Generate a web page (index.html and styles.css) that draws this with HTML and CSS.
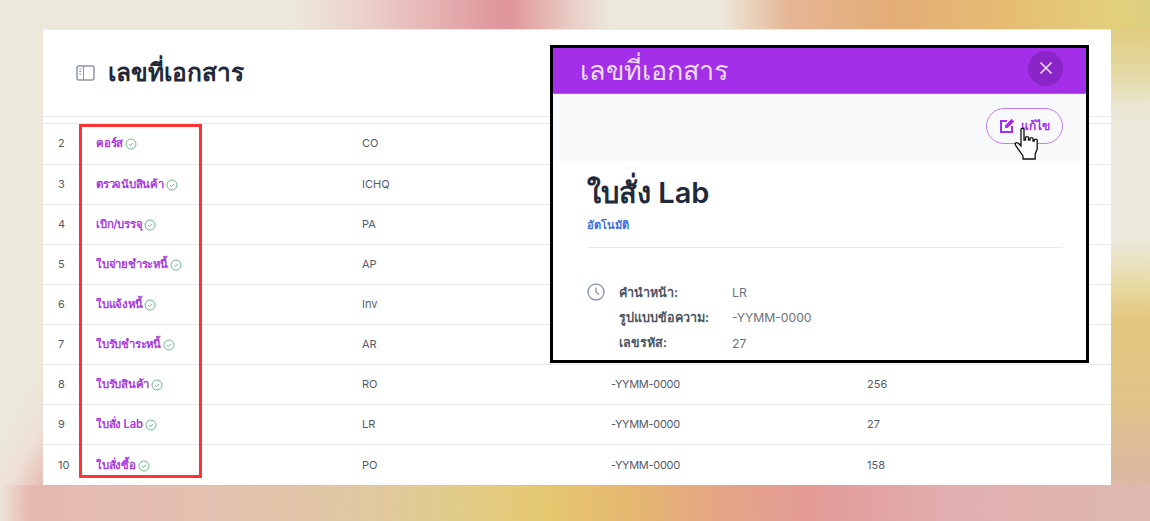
FILE: index.html
```html
<!DOCTYPE html>
<html>
<head>
	<title>เลขที่เอกสาร</title>
	<link rel="stylesheet" href="styles.css">
</head>
<body>

<div class="card">
	<div class="card-head">
		<svg class="head-icon" width="20" height="18" viewBox="0 0 20 18" fill="none" stroke="#8f97a8" stroke-width="1.5">
			<rect x="1" y="2" width="17" height="14" rx="2"/>
			<path d="M7.5 2v14M3.2 5h2M3.2 7.5h2M3.2 10h2" stroke-width="1.1"/>
		</svg>
		<h1>เลขที่เอกสาร</h1>
	</div>
	<div class="head-gap"></div>

	<table class="doc-table">
		<tr><td class="num">2</td><td class="name"><a>คอร์ส</a><svg class="check" viewBox="0 0 12 12"><circle cx="6" cy="6" r="5"/><path d="M4 6.200l1.400 1.300L8 4.900"/></svg></td><td class="pre">CO</td><td class="fmt"></td><td class="cnt"></td></tr>
		<tr><td class="num">3</td><td class="name"><a>ตรวจนับสินค้า</a><svg class="check" viewBox="0 0 12 12"><circle cx="6" cy="6" r="5"/><path d="M4 6.200l1.400 1.300L8 4.900"/></svg></td><td class="pre">ICHQ</td><td class="fmt"></td><td class="cnt"></td></tr>
		<tr><td class="num">4</td><td class="name"><a>เบิก/บรรจุ</a><svg class="check" viewBox="0 0 12 12"><circle cx="6" cy="6" r="5"/><path d="M4 6.200l1.400 1.300L8 4.900"/></svg></td><td class="pre">PA</td><td class="fmt"></td><td class="cnt"></td></tr>
		<tr><td class="num">5</td><td class="name"><a>ใบจ่ายชำระหนี้</a><svg class="check" viewBox="0 0 12 12"><circle cx="6" cy="6" r="5"/><path d="M4 6.200l1.400 1.300L8 4.900"/></svg></td><td class="pre">AP</td><td class="fmt"></td><td class="cnt"></td></tr>
		<tr><td class="num">6</td><td class="name"><a>ใบแจ้งหนี้</a><svg class="check" viewBox="0 0 12 12"><circle cx="6" cy="6" r="5"/><path d="M4 6.200l1.400 1.300L8 4.900"/></svg></td><td class="pre">Inv</td><td class="fmt"></td><td class="cnt"></td></tr>
		<tr><td class="num">7</td><td class="name"><a>ใบรับชำระหนี้</a><svg class="check" viewBox="0 0 12 12"><circle cx="6" cy="6" r="5"/><path d="M4 6.200l1.400 1.300L8 4.900"/></svg></td><td class="pre">AR</td><td class="fmt"></td><td class="cnt"></td></tr>
		<tr><td class="num">8</td><td class="name"><a>ใบรับสินค้า</a><svg class="check" viewBox="0 0 12 12"><circle cx="6" cy="6" r="5"/><path d="M4 6.200l1.400 1.300L8 4.900"/></svg></td><td class="pre">RO</td><td class="fmt">-YYMM-0000</td><td class="cnt">256</td></tr>
		<tr><td class="num">9</td><td class="name"><a>ใบสั่ง Lab</a><svg class="check" viewBox="0 0 12 12"><circle cx="6" cy="6" r="5"/><path d="M4 6.200l1.400 1.300L8 4.900"/></svg></td><td class="pre">LR</td><td class="fmt">-YYMM-0000</td><td class="cnt">27</td></tr>
		<tr><td class="num">10</td><td class="name"><a>ใบสั่งซื้อ</a><svg class="check" viewBox="0 0 12 12"><circle cx="6" cy="6" r="5"/><path d="M4 6.200l1.400 1.300L8 4.900"/></svg></td><td class="pre">PO</td><td class="fmt">-YYMM-0000</td><td class="cnt">158</td></tr>
	</table>
</div>

<div class="red-box"></div>

<div class="modal">
	<div class="modal-head">
		<span class="modal-title">เลขที่เอกสาร</span>
		<div class="close-btn">
			<svg width="16" height="16" viewBox="0 0 16 16" fill="none" stroke="#ecdcf8" stroke-width="1.700"><path d="M2.500 2.500l11 11M13.500 2.500l-11 11"/></svg>
		</div>
	</div>
	<div class="modal-bar">
		<div class="edit-btn">
			<svg width="16" height="16" viewBox="0 0 16 16" fill="none" stroke="#a32fe8" stroke-width="2"><path d="M8 3H2v11h11V8"/><path d="M6.500 9.500V7.400L12.600 1.300l2.100 2.100-6.100 6.100z" fill="#a32fe8" stroke-width="1"/></svg>
			<span>แก้ไข</span>
		</div>
	</div>
	<div class="modal-body">
		<h2>ใบสั่ง Lab</h2>
		<a class="auto-link">อัตโนมัติ</a>
		<hr class="rule">
		<div class="detail">
			<svg class="clock" width="18" height="18" viewBox="0 0 18 18" fill="none" stroke="#8f9bb3" stroke-width="1.400"><circle cx="9" cy="9" r="8"/><path d="M9 4.500V9l3 2.400"/></svg>
			<dl class="fields">
				<dt>คำนำหน้า:</dt><dd>LR</dd>
				<dt>รูปแบบข้อความ:</dt><dd>-YYMM-0000</dd>
				<dt>เลขรหัส:</dt><dd>27</dd>
			</dl>
		</div>
	</div>
</div>

<svg class="hand" width="27" height="34" viewBox="0 0 27 34">
	<path d="M8 2.500c0-1.600 3-1.600 3 0V13h1.500v-2.500c0-1.200 3-1.200 3 0V13H17v-1.500c0-1.200 3-1.200 3 0V14h1.200v-1c0-1.200 3-1.200 3 0v9l-2 5v5H10v-3L3 19c-1.500-2-1-4 2-3l3 3z" fill="#fff" stroke="#111" stroke-width="1.300"/>
</svg>

</body>
</html>
```

FILE: styles.css
```css
* {
	box-sizing: border-box;
}

body {
	margin: 0;
	width: 1150px;
	height: 521px;
	overflow: hidden;
	padding: 29px 39px 36px 43px;
	font-family: Inter, "Noto Sans", sans-serif;
	background-color: #ece9dc;
	/* the blurred backdrop only shows as four strips round the card */
	background-image:
		linear-gradient(90deg, #ece9dc 0, #ece9dc 290px, #ebcfc8 370px, #e09aa0 490px, #e0959c 510px, #ead0c8 575px, #ece9dc 612px, #ece9dc 720px, #e6b594 790px, #e4ad78 890px, #e5bb72 1000px, #e3cf7c 1110px, #dccf80 1150px),
		linear-gradient(90deg, #eee4d8 0, #e6b8b0 30px, #e3c0b0 200px, #e0c8a0 370px, #e2cc85 470px, #e5c76f 550px, #e5b870 630px, #e5a586 720px, #e39a96 810px, #e2aeb0 950px, #dfb8b0 1150px),
		linear-gradient(180deg, #e2cf78 0, #e0cc80 30px, #e4d8a0 70px, #ebe8d8 110px, #ece9dc 140px, #ece9dc 240px, #e8dca8 280px, #e4c880 320px, #e0c488 400px, #ddb8a0 470px, #dcb8b0 521px),
		linear-gradient(120deg, #ece9dc 72%, #eee0d6 84%, #e6bcb4 94%, #e4b6b0 100%);
	background-repeat: no-repeat;
	background-size: 100% 30px, 100% 36px, 39px 100%, 43px 100%;
	background-position: 0 0, 0 100%, 100% 0, 0 0;
}

.card {
	height: 456px;
	background: #fff;
	border-top: 1px solid #e8eaee;
	display: flex;
	flex-direction: column;
	overflow: hidden;
}

.card-head {
	height: 87px;
	flex: none;
	display: flex;
	align-items: center;
	gap: 12px;
	padding: 0 0 1px 33px;
	border-bottom: 1px solid #e9ebf0;
}

.head-icon {
	flex: none;
}

h1 {
	margin: 0;
	font-size: 24.5px;
	font-weight: 700;
	color: #1f2937;
}

.head-gap {
	height: 7px;
	flex: none;
	border-bottom: 1px solid #e5e7eb;
}

.doc-table {
	width: 100%;
	border-collapse: collapse;
	table-layout: fixed;
	font-size: 11px;
	color: #555b66;
}

.doc-table td {
	height: 40.1px;
	padding: 0 0 1px;
	border-bottom: 1px solid #e8e8ea;
	white-space: nowrap;
}

.doc-table tr:last-child td {
	border-bottom: none;
}

.num {
	width: 53px;
	padding-left: 15px !important;
}

.name {
	width: 266px;
}

.name a {
	color: #a83ae0;
	font-size: 11.3px;
	font-weight: 600;
	letter-spacing: -0.25px;
}

.check {
	width: 12px;
	height: 12px;
	margin-left: 2px;
	vertical-align: -3px;
	fill: none;
	stroke: #5fb37c;
	stroke-width: 0.9;
}

.pre {
	width: 249px;
}

.fmt {
	width: 256px;
	letter-spacing: -0.3px;
}

/* highlight drawn on the screenshot */
.red-box {
	position: absolute;
	left: 79px;
	top: 124px;
	width: 123px;
	height: 354px;
	border: 3px solid #ff3333;
}

.modal {
	position: absolute;
	left: 550px;
	top: 45px;
	width: 539px;
	height: 318px;
	background: #fff;
	border: 3px solid #000;
	overflow: hidden;
}

.modal-head {
	height: 46px;
	background: #a32fe8;
	display: flex;
	align-items: center;
	justify-content: space-between;
	padding: 0 23px 0 27px;
	border-bottom: 1px solid #b55aed;
}

.modal-title {
	font-size: 27px;
	font-weight: 500;
	color: #ecdcf8;
}

.close-btn {
	width: 35px;
	height: 35px;
	margin-top: -5px;
	border-radius: 50%;
	background: #8a25c8;
	display: flex;
	align-items: center;
	justify-content: center;
}

.modal-bar {
	height: 67px;
	background: #f8f9fb;
	display: flex;
	align-items: center;
	justify-content: flex-end;
	padding: 0 23px 4px 0;
}

.edit-btn {
	width: 77px;
	height: 36px;
	border: 1px solid #c27df0;
	border-radius: 18px;
	display: flex;
	align-items: center;
	justify-content: center;
	gap: 6px;
	font-size: 12px;
	font-weight: 600;
	color: #a32fe8;
}

.modal-body {
	padding: 14px 24px 0 34px;
}

h2 {
	margin: 0;
	font-size: 29px;
	font-weight: 600;
	line-height: 36px;
	color: #1f2a3d;
}

.auto-link {
	display: block;
	margin-top: 5px;
	font-size: 11px;
	font-weight: 600;
	color: #3f6fe8;
}

.rule {
	margin: 13px 0 0;
	border: 0;
	border-top: 1px solid #e6e9f0;
}

.detail {
	display: flex;
	gap: 14px;
	margin-top: 32px;
}

.clock {
	flex: none;
	margin-top: 3px;
}

.fields {
	margin: 0;
	display: grid;
	grid-template-columns: 113px 1fr;
	grid-auto-rows: 25.3px;
	align-items: center;
	font-size: 12.2px;
}

.fields dt {
	font-size: 12.6px;
	font-weight: 600;
	color: #4b5563;
}

.fields dd {
	margin: 0;
	color: #6b7280;
}

/* mouse pointer in the screenshot */
.hand {
	position: absolute;
	left: 1013px;
	top: 127px;
}
```
